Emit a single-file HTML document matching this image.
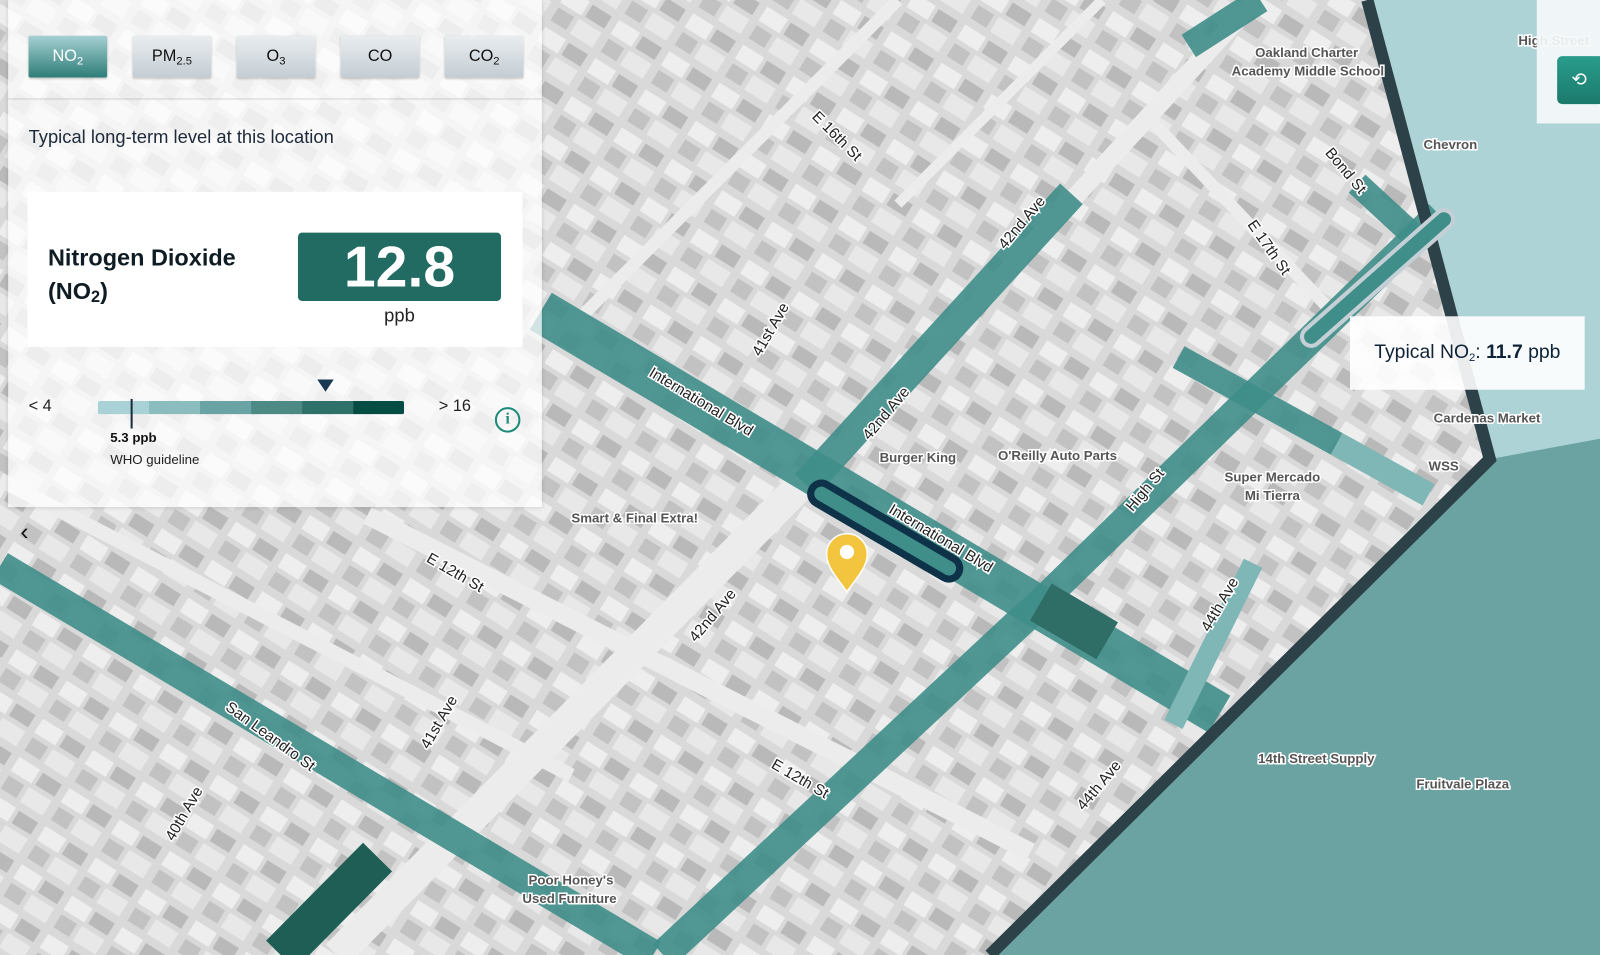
<!DOCTYPE html>
<html><head><meta charset="utf-8"><style>
html,body{margin:0;padding:0;width:1600px;height:955px;overflow:hidden;background:#cfcfcf}
#w{position:absolute;left:0;top:0;width:1568px;height:936px;transform:scale(1.020408,1.020299);transform-origin:0 0;font-family:"Liberation Sans",sans-serif}
.abs{position:absolute}
.btn{position:absolute;top:35px;width:77px;height:41px;border-radius:2px;background:linear-gradient(#e9edf0,#c4cdd3);color:#111;font-size:16px;text-align:center;line-height:41px;box-shadow:0 1px 2px rgba(0,0,0,.2)}
.btn.on{background:linear-gradient(#a6d0d3,#2d7d78);color:#fff}
sub{font-size:11px;vertical-align:-3px;line-height:0}
.lbl{font-family:"Liberation Sans",sans-serif;font-size:13px;font-weight:bold;fill:#555;stroke:#fff;stroke-width:3px;paint-order:stroke}
.st{font-family:"Liberation Sans",sans-serif;font-size:15px;fill:#222;stroke:#fff;stroke-width:3px;paint-order:stroke}
</style></head><body><div id="w">
<svg class="abs" style="left:0;top:0" width="1568" height="936" viewBox="0 0 1568 936">
<defs><pattern id="p" width="58" height="44" patternUnits="userSpaceOnUse" patternTransform="rotate(32)">
<rect width="58" height="44" fill="#d9d9d9"/><rect x="3" y="3" width="24" height="16" fill="#eeeeee"/><rect x="31" y="4" width="22" height="14" fill="#b9b9b9"/><rect x="4" y="24" width="18" height="15" fill="#c2c2c2"/><rect x="27" y="23" width="26" height="17" fill="#e8e8e8"/></pattern></defs>
<rect width="1568" height="936" fill="url(#p)"/>
<g stroke="#ececec" stroke-linecap="butt" fill="none">
<line x1="360" y1="505" x2="1010" y2="835" stroke-width="18"/>
<line x1="790" y1="470" x2="330" y2="936" stroke-width="30"/>
<line x1="1230" y1="0" x2="800" y2="470" stroke-width="18"/>
<line x1="0" y1="470" x2="560" y2="760" stroke-width="14"/>
<line x1="1130" y1="120" x2="1300" y2="300" stroke-width="12"/>
<line x1="880" y1="0" x2="560" y2="320" stroke-width="12"/>
<line x1="1080" y1="0" x2="880" y2="200" stroke-width="10"/>
</g>
<path d="M1340 0 L1460 450 L970 936 L1568 936 L1568 0Z" fill="#add3d7"/>
<path d="M1460 450 L1568 430 L1568 936 L970 936Z" fill="#6aa3a1"/>
<g stroke="#3f8e89" stroke-opacity=".9" fill="none">
<line x1="530" y1="305" x2="1195" y2="700" stroke-width="42"/>
<line x1="1050" y1="190" x2="790" y2="475" stroke-width="30"/>
<line x1="1010" y1="600" x2="650" y2="936" stroke-width="30"/>
<line x1="1410" y1="210" x2="1010" y2="600" stroke-width="28"/>
<line x1="0" y1="555" x2="640" y2="936" stroke-width="30"/>
<line x1="1165" y1="45" x2="1235" y2="0" stroke-width="26"/>
<line x1="1330" y1="180" x2="1395" y2="240" stroke-width="24"/>
<line x1="1155" y1="350" x2="1310" y2="435" stroke-width="24"/>
</g>
<line x1="1310" y1="435" x2="1400" y2="485" stroke="#7fb6b6" stroke-width="24"/>
<line x1="1228" y1="552" x2="1150" y2="710" stroke="#7fb6b6" stroke-width="20"/>
<line x1="370" y1="840" x2="275" y2="936" stroke="#1f5e55" stroke-width="40"/>
<line x1="1020" y1="590" x2="1085" y2="628" stroke="#2e6e66" stroke-width="42"/>
<path d="M1340 0 L1460 450 L970 936" stroke="#2d4148" stroke-width="12" fill="none"/>
<line x1="1285" y1="330" x2="1415" y2="215" stroke="#c5d0d6" stroke-width="22" stroke-linecap="round"/>
<line x1="1285" y1="330" x2="1415" y2="215" stroke="#3f8e89" stroke-width="14" stroke-linecap="round"/>
<line x1="805" y1="484" x2="930" y2="557" stroke="#0e3349" stroke-width="28" stroke-linecap="round"/>
<line x1="805" y1="484" x2="930" y2="557" stroke="#3f8e89" stroke-width="14" stroke-linecap="round"/>
<path d="M830 580 C821 567 810 556 810 543 A20 20 0 0 1 850 543 C850 556 839 567 830 580Z" fill="#f3c53f" stroke="#fff" stroke-width="1.5"/>
<circle cx="830" cy="541" r="7" fill="#fff"/>
<text class="st" transform="translate(635,368) rotate(31)">International Blvd</text>
<text class="st" transform="translate(870,502) rotate(31)">International Blvd</text>
<text class="st" transform="translate(985,245) rotate(-50)">42nd Ave</text>
<text class="st" transform="translate(852,432) rotate(-50)">42nd Ave</text>
<text class="st" transform="translate(682,630) rotate(-50)">42nd Ave</text>
<text class="st" transform="translate(1110,502) rotate(-50)">High St</text>
<text class="st" transform="translate(220,695) rotate(36)">San Leandro St</text>
<text class="st" transform="translate(417,550) rotate(30)">E 12th St</text>
<text class="st" transform="translate(755,752) rotate(30)">E 12th St</text>
<text class="st" transform="translate(1298,150) rotate(50)">Bond St</text>
<text class="st" transform="translate(795,115) rotate(45)">E 16th St</text>
<text class="st" transform="translate(1222,220) rotate(55)">E 17th St</text>
<text class="st" transform="translate(1062,795) rotate(-50)">44th Ave</text>
<text class="st" transform="translate(1185,620) rotate(-60)">44th Ave</text>
<text class="st" transform="translate(420,735) rotate(-60)">41st Ave</text>
<text class="st" transform="translate(745,350) rotate(-60)">41st Ave</text>
<text class="st" transform="translate(170,825) rotate(-60)">40th Ave</text>
<text class="lbl" x="862" y="453">Burger King</text>
<text class="lbl" x="978" y="451">O'Reilly Auto Parts</text>
<text class="lbl" x="560" y="512">Smart &amp; Final Extra!</text>
<text class="lbl" x="1200" y="472">Super Mercado</text>
<text class="lbl" x="1220" y="490">Mi Tierra</text>
<text class="lbl" x="1230" y="56">Oakland Charter</text>
<text class="lbl" x="1207" y="74">Academy Middle School</text>
<text class="lbl" x="1395" y="146">Chevron</text>
<text class="lbl" x="1405" y="414">Cardenas Market</text>
<text class="lbl" x="1400" y="461">WSS</text>
<text class="lbl" x="1233" y="748">14th Street Supply</text>
<text class="lbl" x="1388" y="773">Fruitvale Plaza</text>
<text class="lbl" x="518" y="867">Poor Honey's</text>
<text class="lbl" x="512" y="885">Used Furniture</text>
<text class="lbl" x="1488" y="44">High Street</text>
</svg>
<div class="abs" style="left:8px;top:0;width:523px;height:497px;background:rgba(255,255,255,.74);box-shadow:0 1px 4px rgba(0,0,0,.15)"></div>
<div class="abs" style="left:8px;top:96px;width:523px;height:2px;background:rgba(0,0,0,.08)"></div>
<div class="btn on" style="left:28px">NO<sub>2</sub></div>
<div class="btn" style="left:130px">PM<sub>2.5</sub></div>
<div class="btn" style="left:232px">O<sub>3</sub></div>
<div class="btn" style="left:334px">CO</div>
<div class="btn" style="left:436px">CO<sub>2</sub></div>
<div class="abs" style="left:28px;top:124px;font-size:18px;color:#1d2a3a">Typical long-term level at this location</div>
<div class="abs" style="left:27px;top:188px;width:485px;height:152px;background:#fff"></div>
<div class="abs" style="left:47px;top:236px;font-size:23px;font-weight:bold;color:#0f1c24;line-height:33px">Nitrogen Dioxide<br>(NO<sub style="font-size:16px">2</sub>)</div>
<div class="abs" style="left:292px;top:228px;width:199px;height:67px;background:#226b62;border-radius:4px;color:#fff;font-size:56px;font-weight:bold;text-align:center;line-height:68px">12.8</div>
<div class="abs" style="left:292px;top:299px;width:199px;text-align:center;font-size:18px;color:#222">ppb</div>
<div class="abs" style="left:28px;top:390px;font-size:16px;color:#222">&lt; 4</div>
<div class="abs" style="left:430px;top:390px;font-size:16px;color:#222">&gt; 16</div>
<div class="abs" style="left:96px;top:393px;width:300px;height:13px;display:flex;border-radius:2px;overflow:hidden">
<div style="flex:1;background:#a9d2d6"></div><div style="flex:1;background:#8bbcbe"></div><div style="flex:1;background:#6aa3a3"></div><div style="flex:1;background:#4e8a85"></div><div style="flex:1;background:#2f716a"></div><div style="flex:1;background:#054d44"></div></div>
<div class="abs" style="left:128px;top:391px;width:2px;height:29px;background:#1a2e3e"></div>
<div class="abs" style="left:311px;top:372px;width:0;height:0;border-left:8px solid transparent;border-right:8px solid transparent;border-top:12px solid #173a52"></div>
<div class="abs" style="left:108px;top:421px;font-size:13px;font-weight:bold;color:#111">5.3 ppb</div>
<div class="abs" style="left:108px;top:443px;font-size:13px;color:#222">WHO guideline</div>
<div class="abs" style="left:485px;top:399px;width:21px;height:21px;border:2px solid #1d8a7a;border-radius:50%;color:#1d8a7a;font-size:15px;font-weight:bold;text-align:center;line-height:21px;font-family:'Liberation Serif',serif">i</div>
<div class="abs" style="left:20px;top:508px;font-size:24px;color:#111">‹</div>
<div class="abs" style="left:1323px;top:310px;width:230px;height:72px;background:rgba(255,255,255,.9);font-size:19px;color:#0f2236;line-height:72px;text-align:center">Typical NO<sub>2</sub>: <b>11.7</b> ppb</div>
<div class="abs" style="left:1506px;top:0;width:62px;height:121px;background:rgba(245,248,250,.92)"></div>
<div class="abs" style="left:1526px;top:55px;width:46px;height:47px;border-radius:5px;background:linear-gradient(#2a9c8c,#1a7a6c);color:#fff;font-size:18px;line-height:47px;text-indent:14px">⟲</div>
</div></body></html>
